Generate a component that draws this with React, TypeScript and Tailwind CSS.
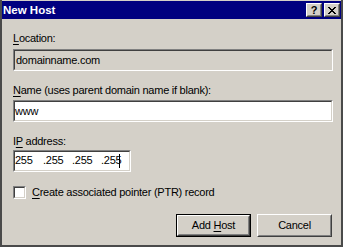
import React from "react";

const font = { fontFamily: '"Liberation Sans", Arial, sans-serif' };

const Sunken: React.FC<{ className?: string; inner?: string; children?: React.ReactNode }> = ({
  className = "",
  inner = "bg-white",
  children,
}) => (
  <div className={`border border-t-[#808080] border-l-[#808080] border-b-white border-r-white ${className}`}>
    <div
      className={`h-full w-full border border-t-[#404040] border-l-[#404040] border-b-[#D4D0C8] border-r-[#D4D0C8] flex items-center ${inner}`}
    >
      {children}
    </div>
  </div>
);

const Raised: React.FC<{ className?: string; children?: React.ReactNode }> = ({ className = "", children }) => (
  <div className={`border border-t-white border-l-white border-b-[#404040] border-r-[#404040] bg-[#D4D0C8] ${className}`}>
    <div className="h-full w-full border border-t-[#D4D0C8] border-l-[#D4D0C8] border-b-[#808080] border-r-[#808080] flex items-center justify-center">
      {children}
    </div>
  </div>
);

export default function App() {
  return (
    <div
      className="w-[343px] h-[247px] bg-[#D4D0C8] border-x-2 border-b-2 border-[#4a4a4a] flex flex-col text-[11px] text-black leading-[13px] tracking-[-0.25px]"
      style={font}
    >
      <div className="h-[18px] mt-px bg-[#000080] flex items-center justify-between pl-[1px] pr-[1px]">
        <span className="text-white font-bold text-[11.5px] tracking-normal">New Host</span>
        <div className="flex gap-[2px]">
          <Raised className="w-[16px] h-[14px]">
            <span className="font-bold text-[11px] leading-none">?</span>
          </Raised>
          <Raised className="w-[16px] h-[14px]">
            <svg width="8" height="7" viewBox="0 0 8 7" shapeRendering="crispEdges">
              <path d="M0 0h2v1H0zM6 0h2v1H6zM1 1h2v1H1zM5 1h2v1H5zM2 2h4v1H2zM3 3h2v1H3zM2 4h4v1H2zM1 5h2v1H1zM5 5h2v1H5zM0 6h2v1H0zM6 6h2v1H6z" fill="#000" />
            </svg>
          </Raised>
        </div>
      </div>

      <div className="flex flex-col pl-[11px] pr-[8px]">
        <div className="mt-[13px]">
          <span className="underline underline-offset-2">L</span>ocation:
        </div>
        <Sunken className="mt-[4px] h-[22px] w-[320px]" inner="bg-[#D4D0C8]">
          <span className="pl-[1px]">domainname.com</span>
        </Sunken>

        <div className="mt-[13px]">
          <span className="underline underline-offset-2">N</span>ame (uses parent domain name if blank):
        </div>
        <Sunken className="mt-[3px] h-[22px] w-[320px]">
          <span>www</span>
        </Sunken>

        <div className="mt-[13px]">
          I<span className="underline underline-offset-2">P</span> address:
        </div>
        <Sunken className="mt-[2px] h-[22px] w-[118px]">
          <div className="flex">
            <span className="w-[28px]">255</span>
            <span className="w-[29px]">.255</span>
            <span className="w-[29px]">.255</span>
            <span>.255</span>
            <span className="w-px h-[14px] bg-black ml-[-2px]" />
          </div>
        </Sunken>

        <div className="mt-[14px] flex items-center gap-[6px]">
          <Sunken className="w-[13px] h-[13px]" />
          <span>
            <span className="underline underline-offset-2">C</span>reate associated pointer (PTR) record
          </span>
        </div>

        <div className="mt-[15px] flex justify-end gap-[6px] pr-[1px]">
          <div className="border border-black">
            <Raised className="w-[73px] h-[21px]">
              <span>
                Add <span className="underline underline-offset-2">H</span>ost
              </span>
            </Raised>
          </div>
          <Raised className="w-[75px] h-[23px]">
            <span>Cancel</span>
          </Raised>
        </div>
      </div>
    </div>
  );
}
